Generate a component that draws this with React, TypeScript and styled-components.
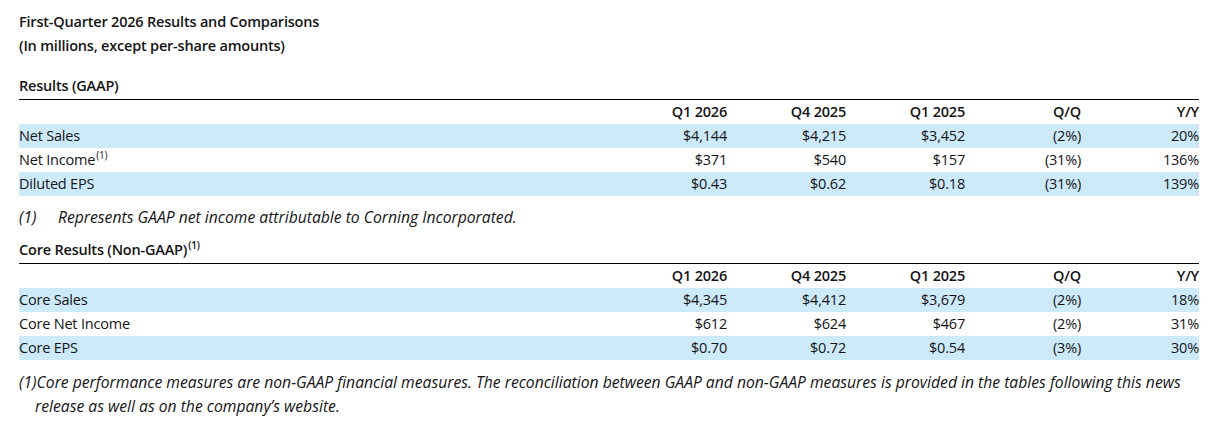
import React from "react";
import styled, { createGlobalStyle } from "styled-components";

const GlobalStyle = createGlobalStyle`
  html, body {
    margin: 0;
    padding: 0;
    background: #ffffff;
  }
  body {
    font-family: "Open Sans", "Noto Sans", Arial, sans-serif;
    color: #141414;
  }
`;

type Row = { label: string; note?: boolean; values: string[] };

const HEADERS = ["Q1 2026", "Q4 2025", "Q1 2025", "Q/Q", "Y/Y"];

const GAAP_ROWS: Row[] = [
  { label: "Net Sales", values: ["$4,144", "$4,215", "$3,452", "(2%)", "20%"] },
  { label: "Net Income", note: true, values: ["$371", "$540", "$157", "(31%)", "136%"] },
  { label: "Diluted EPS", values: ["$0.43", "$0.62", "$0.18", "(31%)", "139%"] },
];

const CORE_ROWS: Row[] = [
  { label: "Core Sales", values: ["$4,345", "$4,412", "$3,679", "(2%)", "18%"] },
  { label: "Core Net Income", values: ["$612", "$624", "$467", "(2%)", "31%"] },
  { label: "Core EPS", values: ["$0.70", "$0.72", "$0.54", "(3%)", "30%"] },
];

const Page = styled.div`
  width: 1180px;
  padding: 10px 0 0 19px;
  display: flex;
  flex-direction: column;
  font-size: 14.5px;
  letter-spacing: -0.2px;
`;

const Title = styled.div`
  font-weight: 600;
  line-height: 24px;
`;

const SectionTitle = styled.div<{ $top: number }>`
  font-weight: 600;
  line-height: 22px;
  margin-top: ${(p) => p.$top}px;
  padding-bottom: 2px;
  border-bottom: 1px solid #000;
`;

const Table = styled.div`
  display: grid;
  grid-template-columns: 1fr 119px 119px 119px 116px 118px;
`;

const Cell = styled.div<{ $band?: boolean; $head?: boolean; $num?: boolean }>`
  height: 24px;
  line-height: 24px;
  white-space: nowrap;
  text-align: ${(p) => (p.$num ? "right" : "left")};
  font-weight: ${(p) => (p.$head ? 600 : 400)};
  background: ${(p) => (p.$band ? "#cdeafb" : "transparent")};
`;

const Sup = styled.sup`
  font-size: 10px;
  line-height: 0;
  vertical-align: 6px;
  margin-left: 1px;
`;

const Note = styled.div`
  font-style: italic;
  font-size: 15.7px;
  letter-spacing: 0;
  line-height: 24px;
  margin-top: 9px;
  display: flex;
`;

const NoteMark = styled.span`
  width: 39px;
`;

const LongNote = styled.div`
  font-style: italic;
  font-size: 15.7px;
  letter-spacing: 0;
  line-height: 24px;
  margin-top: 10px;
  padding-left: 16px;
  text-indent: -16px;
`;

const DataTable = ({ rows }: { rows: Row[] }) => (
  <Table>
    <Cell $head />
    {HEADERS.map((h) => (
      <Cell key={h} $head $num>
        {h}
      </Cell>
    ))}
    {rows.map((r, i) => (
      <React.Fragment key={r.label}>
        <Cell $band={i % 2 === 0}>
          {r.label}
          {r.note && <Sup>(1)</Sup>}
        </Cell>
        {r.values.map((v, j) => (
          <Cell key={j} $band={i % 2 === 0} $num>
            {v}
          </Cell>
        ))}
      </React.Fragment>
    ))}
  </Table>
);

export default function App() {
  return (
    <>
      <GlobalStyle />
      <Page>
        <Title>First-Quarter 2026 Results and Comparisons</Title>
        <Title>(In millions, except per-share amounts)</Title>
        <SectionTitle $top={17}>Results (GAAP)</SectionTitle>
        <DataTable rows={GAAP_ROWS} />
        <Note>
          <NoteMark>(1)</NoteMark>
          <span>Represents GAAP net income attributable to Corning Incorporated.</span>
        </Note>
        <SectionTitle $top={10}>
          Core Results (Non-GAAP)<Sup>(1)</Sup>
        </SectionTitle>
        <DataTable rows={CORE_ROWS} />
        <LongNote>
          (1)Core performance measures are non-GAAP financial measures. The reconciliation between GAAP and
          non-GAAP measures is provided in the tables following this news release as well as on the company’s
          website.
        </LongNote>
      </Page>
    </>
  );
}
